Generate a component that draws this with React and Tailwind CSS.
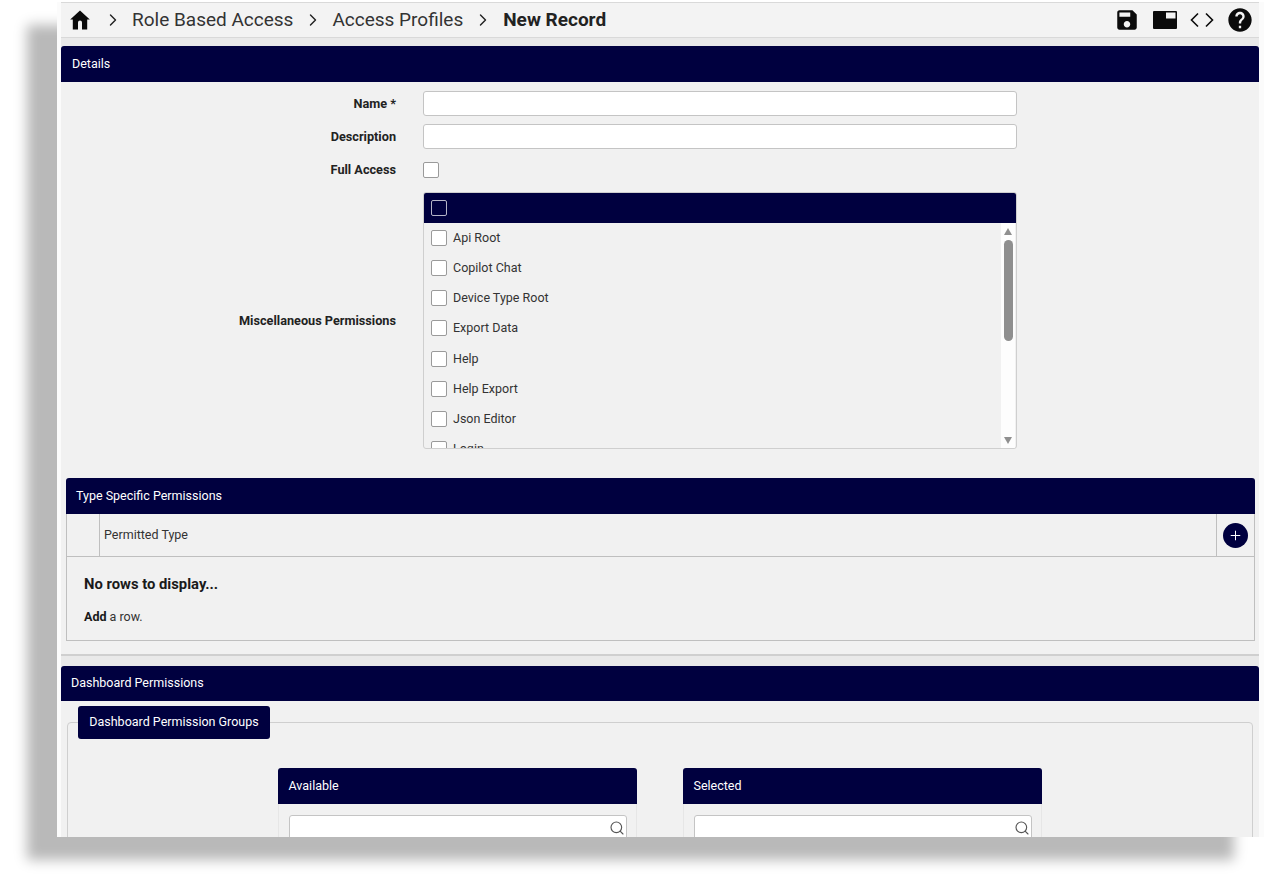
import React from "react";
import { ChevronRight, Plus, Search } from "lucide-react";

const NAVY = "bg-[#00003f]";

const permissions = ["Api Root", "Copilot Chat", "Device Type Root", "Export Data", "Help", "Help Export", "Json Editor", "Login"];

function Box({ dark }) {
    return (
        <span className={`block w-4 h-4 shrink-0 rounded-[2px] border ${dark ? "border-[#b5b5c8] bg-transparent" : "border-[#9a9a9a] bg-white"}`}></span>
    );
}

function Bar({ title, className = "" }) {
    return (
        <div className={`${NAVY} h-9 flex items-center rounded-t-[3px] text-white text-[12.5px] ${className}`}>
            {title}
        </div>
    );
}

function Crumb() {
    return <ChevronRight size={20} strokeWidth={1.7} className="text-[#222]" />;
}

function Row({ label, children, className = "" }) {
    return (
        <div className={`flex items-center ${className}`}>
            <label className="w-[335px] text-right text-[12.7px] leading-4 font-bold text-[#222]">{label}</label>
            <div className="ml-[27px] w-[594px]">{children}</div>
        </div>
    );
}

function Picker({ title }) {
    return (
        <div className="w-[359px]">
            <Bar title={title} className="px-[11px]" />
            <div className="border-x border-[#e6e6e6] pl-[10px] pr-[9px] pt-[11px] h-[80px]">
                <div className="h-[25px] rounded-[3px] border border-[#c4c4c4] bg-white flex items-center justify-end pr-[1px]">
                    <Search size={16} strokeWidth={1.7} className="text-[#555]" />
                </div>
            </div>
        </div>
    );
}

export default function App() {
    return (
        <div className="min-h-[889px] bg-white pt-[2px] pl-[57px] font-['Roboto',sans-serif]">
            <div className="w-[1207px] h-[835px] overflow-hidden bg-[#f1f1f1] border-l-[4px] border-r-[5px] border-[#fbfbfb] shadow-[-30px_23px_12px_#b9b9b9]">
                {/* top bar */}
                <div className="h-9 -ml-[4px] -mr-[5px] px-[13px] flex items-center bg-[#f3f3f3] border-t border-b border-[#d9d9d9] text-[#222]">
                    <svg width="20" height="20" viewBox="0 0 20 20" className="text-[#0b0b0b] shrink-0" fill="currentColor">
                        <path d="M10 0.6 L19.8 9.6 L17.2 9.6 L17.2 19.4 L12 19.4 L12 12.4 A2 2 0 0 0 8 12.4 L8 19.4 L2.8 19.4 L2.8 9.6 L0.2 9.6 Z" />
                    </svg>
                    <span className="flex items-center ml-[13px] text-[19px]">
                        <Crumb />
                        <span className="ml-[9px] text-[#333]">Role Based Access</span>
                        <span className="ml-[10px]"><Crumb /></span>
                        <span className="ml-[9px] text-[#333]">Access Profiles</span>
                        <span className="ml-[10px]"><Crumb /></span>
                        <span className="ml-[10px] font-bold text-[#222]">New Record</span>
                    </span>
                    <div className="ml-auto flex items-center gap-3 -mr-[3px] text-[#0b0b0b]">
                        <svg width="26" height="26" viewBox="0 0 24 24" fill="currentColor">
                            <path d="M17 3H5c-1.11 0-2 .9-2 2v14c0 1.1.89 2 2 2h14c1.1 0 2-.9 2-2V7l-4-4zm-5 16c-1.66 0-3-1.34-3-3s1.34-3 3-3 3 1.34 3 3-1.34 3-3 3zm3-10H5V5h10v4z" />
                        </svg>
                        <svg width="26" height="20" viewBox="0 0 26 20" fill="currentColor">
                            <path fillRule="evenodd" d="M2 1h22a1 1 0 0 1 1 1v16a1 1 0 0 1-1 1H2a1 1 0 0 1-1-1V2a1 1 0 0 1 1-1zm12 1.5v6h9.5v-6z" />
                        </svg>
                        <svg width="24" height="20" viewBox="0 0 24 20" fill="none" stroke="currentColor" strokeWidth="1.6">
                            <path d="M8 3.5 L1.5 10 L8 16.5 M16 3.5 L22.5 10 L16 16.5" />
                        </svg>
                        <svg width="28" height="28" viewBox="0 0 24 24" fill="currentColor">
                            <path d="M12 2C6.48 2 2 6.48 2 12s4.48 10 10 10 10-4.48 10-10S17.52 2 12 2zm1 17h-2v-2h2v2zm2.07-7.75l-.9.92C13.45 12.9 13 13.5 13 15h-2v-.5c0-1.1.45-2.1 1.17-2.83l1.24-1.26c.37-.36.59-.86.59-1.41 0-1.1-.9-2-2-2s-2 .9-2 2H8c0-2.21 1.79-4 4-4s4 1.79 4 4c0 .88-.36 1.68-.93 2.25z" />
                        </svg>
                    </div>
                </div>
                <div className="h-2 -ml-[4px] -mr-[5px] bg-[#e9e9e9]"></div>

                {/* Details */}
                <Bar title="Details" className="px-[11px]" />
                <div className="pt-[9px]">
                    <Row label="Name *">
                        <div className="h-[25px] rounded-[3px] border border-[#c4c4c4] bg-white"></div>
                    </Row>
                    <Row label="Description" className="mt-2">
                        <div className="h-[25px] rounded-[3px] border border-[#c4c4c4] bg-white"></div>
                    </Row>
                    <Row label="Full Access" className="mt-[13px]">
                        <Box />
                    </Row>
                    <Row label="Miscellaneous Permissions" className="mt-[14px]">
                        <div className="h-[257px] overflow-hidden rounded-[3px] border border-[#cfcfcf] flex flex-col">
                            <div className={`${NAVY} h-[30px] shrink-0 flex items-center px-[7px]`}>
                                <Box dark />
                            </div>
                            <div className="flex flex-1 min-h-0">
                                <ul className="flex-1 overflow-hidden pt-[7px] pl-[7px]">
                                    {permissions.map((p) => (
                                        <li key={p} className="h-[30.15px] flex items-start gap-[6px] text-[12.5px] text-[#333]">
                                            <Box />
                                            <span className="leading-4">{p}</span>
                                        </li>
                                    ))}
                                </ul>
                                <div className="w-[14px] mr-px shrink-0 bg-[#fdfdfd] flex flex-col items-center pt-[5px] pb-[4px]">
                                    <span className="w-0 h-0 border-x-[4px] border-x-transparent border-b-[7px] border-b-[#8f8f8f]"></span>
                                    <span className="mt-[5px] w-[9px] h-[101px] rounded-full bg-[#8f8f8f]"></span>
                                    <span className="mt-auto w-0 h-0 border-x-[4px] border-x-transparent border-t-[7px] border-t-[#8f8f8f]"></span>
                                </div>
                            </div>
                        </div>
                    </Row>
                </div>

                {/* Type Specific Permissions */}
                <div className="mt-[29px] mx-[5px] w-[1189px]">
                    <Bar title="Type Specific Permissions" className="px-[10px]" />
                    <div className="border-x border-b border-[#bfbfbf] h-[127px]">
                        <div className="h-[43px] flex items-stretch border-b border-[#bfbfbf] text-[12.5px] text-[#333]">
                            <div className="w-[33px] border-r border-[#bfbfbf]"></div>
                            <div className="flex-1 flex items-center pl-[4px]">Permitted Type</div>
                            <div className="w-[38px] border-l border-[#bfbfbf] flex items-center justify-center">
                                <span className={`${NAVY} w-[25px] h-[25px] rounded-full flex items-center justify-center text-white`}>
                                    <Plus size={15} strokeWidth={1.6} />
                                </span>
                            </div>
                        </div>
                        <div className="pl-[17px] pt-[19px]">
                            <h3 className="text-[14.8px] font-bold text-[#1a1a1a] leading-[17px]">No rows to display...</h3>
                            <p className="mt-[16px] text-[12.5px] leading-[15px] text-[#333]"><b className="text-[#1a1a1a]">Add</b> a row.</p>
                        </div>
                    </div>
                </div>

                {/* Dashboard Permissions */}
                <div className="mt-[13px] h-[12px] bg-[#e9e9e9] border-t-2 border-[#cfcfcf]"></div>
                <Bar title="Dashboard Permissions" className="px-[10px] h-[35px]" />
                <div className="mx-[6px] mt-[21px] relative">
                    <div className="h-[200px] rounded-t-[4px] border border-[#cfcfcf] pt-[45px] flex justify-center gap-[46px] pr-[1px]">
                        <Picker title="Available" />
                        <Picker title="Selected" />
                    </div>
                    <div className={`${NAVY} absolute left-[11px] -top-[16px] w-[192px] h-[33px] rounded-[3px] flex items-center justify-center text-white text-[12.5px]`}>
                        Dashboard Permission Groups
                    </div>
                </div>
            </div>
        </div>
    );
}
